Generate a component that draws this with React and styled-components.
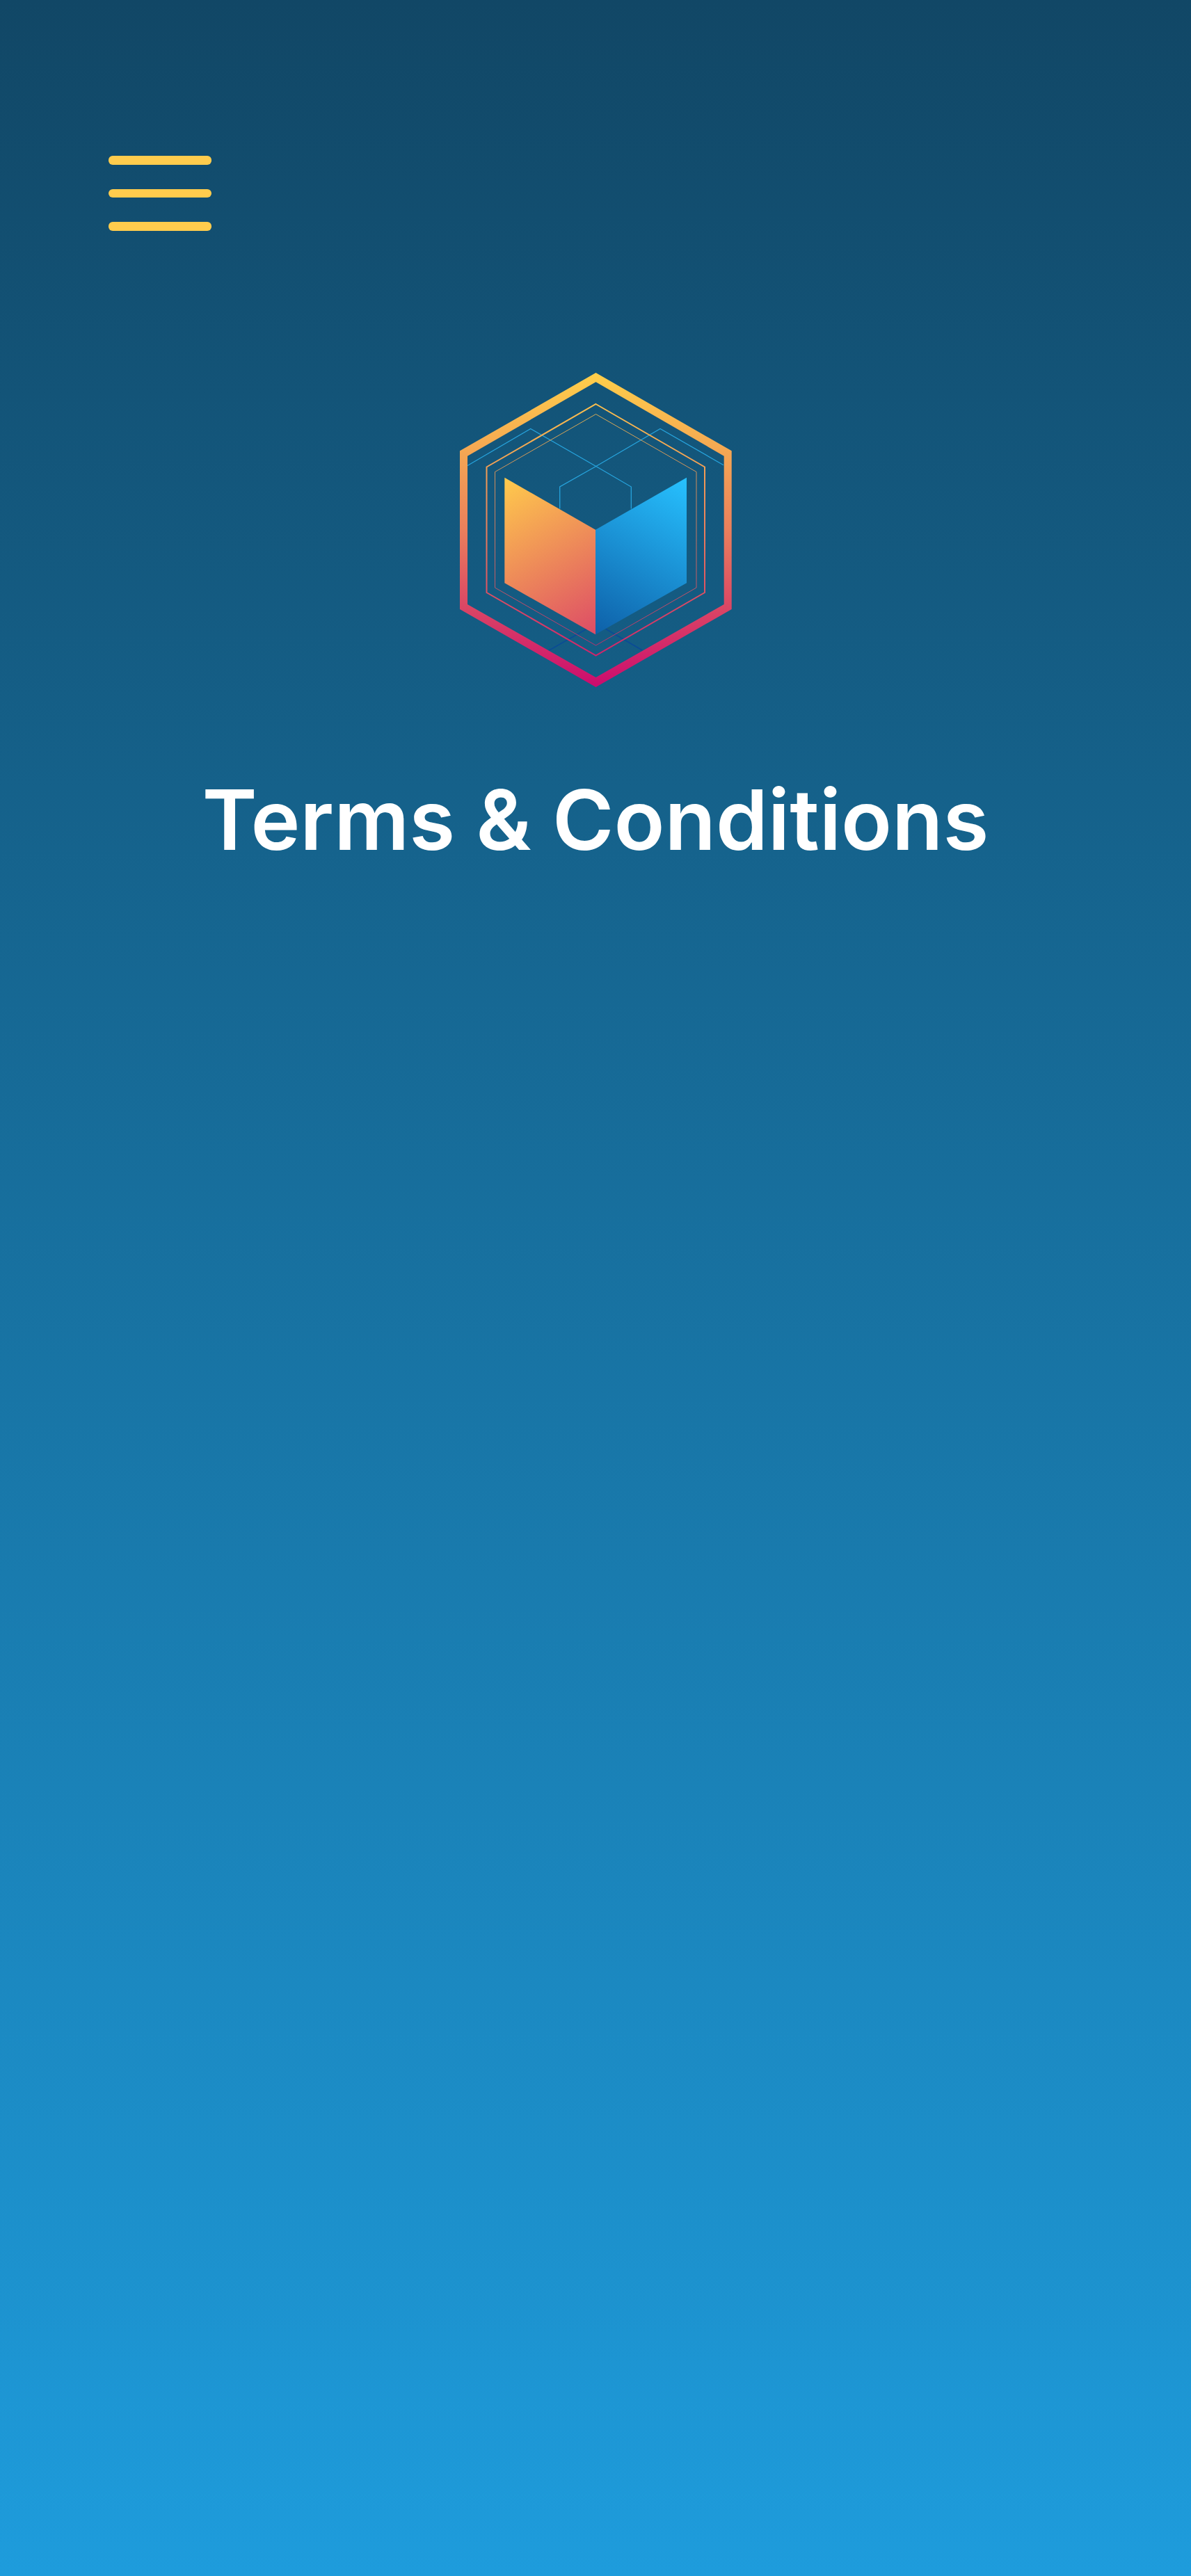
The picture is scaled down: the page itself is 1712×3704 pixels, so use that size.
import React from 'react'
import styled, { createGlobalStyle } from 'styled-components'

const Global = createGlobalStyle`
  html, body { margin: 0; padding: 0; }
`

const Page = styled.div`
  width: 100%;
  height: 3704px;
  box-sizing: border-box;
  padding-top: 224px;
  background: linear-gradient(180deg, #114766 0%, #1e9cdc 100%);
  font-family: Inter, "Liberation Sans", sans-serif;
  overflow: hidden;
`

const Menu = styled.div`
  display: flex;
  flex-direction: column;
  gap: 35px;
  width: 148px;
  margin-left: 156px;
`

const Bar = styled.div`
  height: 12.5px;
  border-radius: 6px;
  background: #ffcc4d;
`

const Logo = styled.svg`
  display: block;
  width: 452px;
  height: 490px;
  margin: 178px auto 0;
`

const Title = styled.h1`
  margin: 106px 0 0;
  font-size: 120px;
  font-weight: 600;
  line-height: 145px;
  text-align: center;
  color: #fff;
`

const HexLogo = () => (
  <Logo viewBox="0 0 452 490">
    <defs>
      <linearGradient id="ring" x1="0" y1="26" x2="0" y2="478" gradientUnits="userSpaceOnUse">
        <stop offset="0" stopColor="#ffcf4a" />
        <stop offset="0.5" stopColor="#ea7f5c" />
        <stop offset="1" stopColor="#cb0b6e" />
      </linearGradient>
      <linearGradient id="warm" x1="95" y1="177" x2="226" y2="402" gradientUnits="userSpaceOnUse">
        <stop offset="0" stopColor="#ffcb4c" />
        <stop offset="1" stopColor="#dd4c66" />
      </linearGradient>
      <linearGradient id="cool" x1="357" y1="177" x2="226" y2="402" gradientUnits="userSpaceOnUse">
        <stop offset="0" stopColor="#27c1ff" />
        <stop offset="1" stopColor="#0e60a8" />
      </linearGradient>
    </defs>
    <g fill="none" strokeWidth="1.3">
      <path stroke="#27a3dc" d="M42 159.5 L132.7 106.5 L226.7 160.5 L277.3 190 V221.5" />
      <path stroke="#27a3dc" d="M410 158.7 L319 106.5 L226.7 160.5 L174.7 190 V221.5" />
      <path stroke="#0a4a98" strokeWidth="1.5" d="M158.3 425.7 L213.3 394.3 M293.3 425 L240.7 394.3" />
    </g>
    <path
      fillRule="evenodd"
      fill="url(#ring)"
      d="M226.5 26 L421.7 138.3 V366 L226.5 478 L31 366 V138.3 Z M226.5 39.3 L42 145.7 V359 L226.5 464 L410.7 359 V145.7 Z"
    />
    <path fill="none" stroke="url(#ring)" strokeWidth="2" d="M226.5 71 L383 161.5 V342 L226.5 432.5 L69.5 342 V161.5 Z" />
    <path fill="none" stroke="url(#ring)" strokeWidth="1" opacity="0.85" d="M226.5 85.5 L371 168.5 V335 L226.5 418 L81.5 335 V168.5 Z" />
    <path fill="url(#warm)" d="M95.3 176.7 L226 251.7 V402.3 L95.3 328.3 Z" />
    <path fill="url(#cool)" d="M226 251.7 L357 176.7 V328.3 L226 402.3 Z" />
  </Logo>
)

export default function App() {
  return (
    <Page>
      <Global />
      <Menu>
        <Bar />
        <Bar />
        <Bar />
      </Menu>
      <HexLogo />
      <Title>Terms &amp; Conditions</Title>
    </Page>
  )
}
